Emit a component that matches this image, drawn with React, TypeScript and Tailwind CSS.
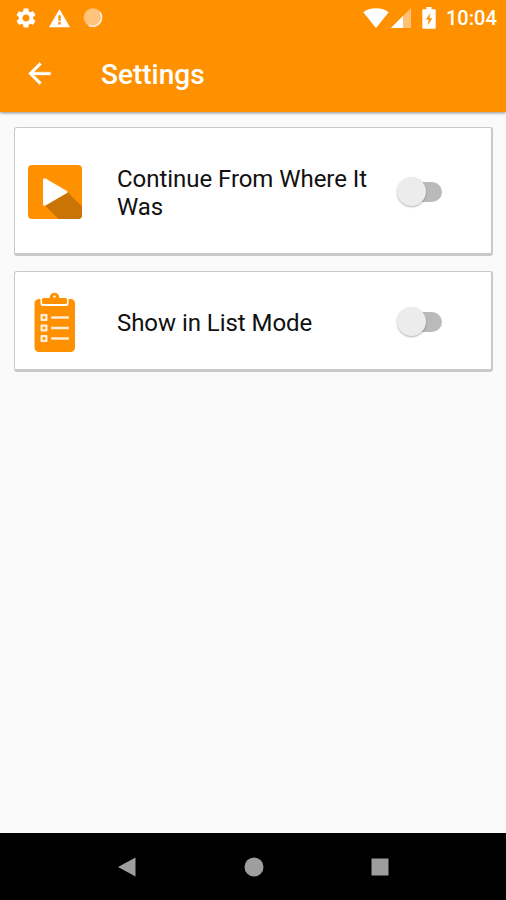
import { useState } from "react";
import type { ReactNode } from "react";

const StatusBar = () => (
  <div className="flex h-9 items-center pr-[10px] pl-[14px] text-white">
    <svg className="-mt-px size-6" viewBox="0 0 24 24" fill="currentColor">
      <path d="M19.14 12.94c.04-.3.06-.61.06-.94 0-.32-.02-.64-.07-.94l2.03-1.58c.18-.14.23-.41.12-.61l-1.92-3.32c-.12-.22-.37-.29-.59-.22l-2.39.96c-.5-.38-1.03-.7-1.62-.94l-.36-2.54c-.04-.24-.24-.41-.48-.41h-3.84c-.24 0-.43.17-.47.41l-.36 2.54c-.59.24-1.13.57-1.62.94l-2.39-.96c-.22-.08-.47 0-.59.22L2.74 8.87c-.12.21-.08.47.12.61l2.03 1.58c-.05.3-.09.63-.09.94s.02.64.07.94l-2.03 1.58c-.18.14-.23.41-.12.61l1.92 3.32c.12.22.37.29.59.22l2.39-.96c.5.38 1.03.7 1.62.94l.36 2.54c.05.24.24.41.48.41h3.84c.24 0 .44-.17.47-.41l.36-2.54c.59-.24 1.13-.56 1.62-.94l2.39.96c.22.08.47 0 .59-.22l1.92-3.32c.12-.22.07-.47-.12-.61l-2.01-1.58zM12 15.6c-1.98 0-3.6-1.62-3.6-3.6s1.62-3.6 3.6-3.6 3.6 1.62 3.6 3.6-1.62 3.6-3.6 3.6z" />
    </svg>
    <svg className="ml-[10px] size-[23px]" viewBox="0 0 24 24">
      <path d="M1 21h22L12 2z" fill="#fff" />
      <path d="M10.700 8.500h2.600v5.800h-2.600zM10.700 15.600h2.600v2.600h-2.600z" fill="#ff9100" />
    </svg>
    <svg className="ml-[12px] h-5 w-5" viewBox="0 0 20 20">
      <circle cx="10" cy="9.500" r="9.300" fill="#ffc37d" />
      <path d="M17 4.200A9 9 0 0 1 5.500 17.300" fill="none" stroke="#fff0dc" strokeWidth="1.600" />
    </svg>
    <svg className="ml-auto -mt-px h-5 w-[26px]" viewBox="0 0 26 20" fill="currentColor">
      <path d="M13 20 .3 4.300C3.500 1.600 8 .3 13 .3s9.500 1.300 12.700 4z" />
    </svg>
    <svg className="ml-[2px] -mt-px h-5 w-5" viewBox="0 0 20 20">
      <path d="M0 20 20 0v20z" fill="#ffc078" />
      <path d="M0 20 12 8v12z" fill="#fff" />
    </svg>
    <svg className="ml-[11px] -mt-px h-[22px] w-[14px]" viewBox="0 0 14 22">
      <path
        d="M4.500 0h5v2.300H13q.7 0 .7.800V21q0 .8-.7.800H1q-.7 0-.7-.800V3.100q0-.8.700-.800h3.500z"
        fill="#fff"
      />
      <path d="M8.500 6 3.800 12.600h2.900l-1.200 5.900 4.800-7.300H7.500z" fill="#ff9100" />
    </svg>
    <span className="ml-[10px] w-[50px] text-[20px] leading-none font-medium whitespace-nowrap">
      10:04
    </span>
  </div>
);

const PlayIcon = () => (
  <svg className="h-[54px] w-[54px]" viewBox="0 0 54 54">
    <rect width="54" height="54" rx="4" fill="#ff9100" />
    <path d="M39.500 27 54 41.500V50q0 4-4 4H30.500L16.500 40z" fill="#ca7406" />
    <path
      d="M15 15.500q0-3.500 3-1.800l20.500 12q2 1.300 0 2.600L18 40.300q-3 1.700-3-1.800z"
      fill="#fff"
    />
  </svg>
);

const ClipboardIcon = () => (
  <svg className="h-[62px] w-[42px]" viewBox="0 0 42 62">
    <rect x=".5" y="8" width="40.500" height="53" rx="4.500" fill="#ff9100" />
    <path d="M6.500 6v6.500Q6.500 15 9 15h23q2.500 0 2.500-2.500V6z" fill="#fff" />
    <path
      d="M9.500 7H15q.8 0 .9-1.500a4.700 4.700 0 0 1 9.200 0q.1 1.500.9 1.500h5.500q1.500 0 1.500 1.500v3q0 1.500-1.500 1.500h-22Q8 13 8 11.500v-3Q8 7 9.500 7z"
      fill="#ff9100"
    />
    <circle cx="20.500" cy="5.500" r="1.300" fill="#fff3e2" />
    {[26.5, 37, 47.5].map((y) => (
      <g key={y}>
        <rect x="6.500" y={y - 3.5} width="7" height="7" rx="1" fill="#fff0dd" />
        <rect x="8.700" y={y - 1.3} width="2.600" height="2.600" fill="#ff9100" />
        <rect x="17" y={y - 1.3} width="18" height="2.600" rx="1" fill="#ffecd2" />
      </g>
    ))}
  </svg>
);

const Toggle = ({ label }: { label: string }) => {
  const [isOn, setIsOn] = useState(false);

  return (
    <button
      type="button"
      role="switch"
      aria-checked={isOn}
      aria-label={label}
      onClick={() => setIsOn(!isOn)}
      className={`flex h-5 w-[45px] items-center rounded-full bg-linear-to-r from-transparent from-30% to-30% ${
        isOn ? "justify-end to-[#ffc880]" : "to-[#bababa]"
      }`}
    >
      <span
        className={`size-[29px] shrink-0 rounded-full shadow-[0_1px_2px_rgba(0,0,0,0.3)] ${
          isOn ? "bg-[#ff9100]" : "bg-[#ececec]"
        }`}
      />
    </button>
  );
};

type SettingProps = {
  className: string;
  icon: ReactNode;
  label: string;
};

const Setting = ({ className, icon, label }: SettingProps) => (
  <div
    className={`flex items-center rounded-[3px] border border-r-2 border-b-[3px] border-[#c9c9c9] bg-white pt-[2px] pr-[49px] pl-3 ${className}`}
  >
    <div className="flex w-[56px] justify-center">{icon}</div>
    <div className="ml-[34px] w-[265px] pt-[3px] text-[24px] leading-[28px] tracking-[-0.05px] text-[#111]">
      {label}
    </div>
    <div className="ml-auto">
      <Toggle label={label} />
    </div>
  </div>
);

const App = () => (
  <div className="flex h-[900px] w-[506px] flex-col bg-[#fafafa] font-[Roboto,sans-serif]">
    <header className="h-[112px] bg-[#ff9100] shadow-[0_1px_3px_rgba(0,0,0,0.45)]">
      <StatusBar />
      <div className="flex h-[76px] items-center pl-[23px] text-white">
        <svg
          className="-mt-px size-[33px]"
          viewBox="0 0 24 24"
          fill="currentColor"
          stroke="currentColor"
          strokeWidth=".3"
        >
          <path d="M20 11H7.830l5.590-5.590L12 4l-8 8 8 8 1.410-1.410L7.830 13H20v-2z" />
        </svg>
        <h1 className="ml-[45px] pt-[2px] text-[28px] font-medium">Settings</h1>
      </div>
    </header>
    <main className="flex flex-1 flex-col gap-[15px] pt-[15px] pr-[13px] pl-[14px]">
      <Setting className="h-[129px]" icon={<PlayIcon />} label="Continue From Where It Was" />
      <Setting className="h-[101px]" icon={<ClipboardIcon />} label="Show in List Mode" />
    </main>
    <nav className="flex h-[67px] items-center justify-between bg-black pr-[116px] pl-[117px]">
      <svg className="h-5 w-5" viewBox="0 0 20 20" fill="#9e9e9e">
        <path d="M1 10 18.500.500v19z" />
      </svg>
      <svg className="h-5 w-5" viewBox="0 0 20 20" fill="#9e9e9e">
        <circle cx="10" cy="10" r="9.500" />
      </svg>
      <svg className="h-5 w-5" viewBox="0 0 20 20" fill="#9e9e9e">
        <rect x="1.500" y="1.500" width="17" height="17" />
      </svg>
    </nav>
  </div>
);

export default App;
